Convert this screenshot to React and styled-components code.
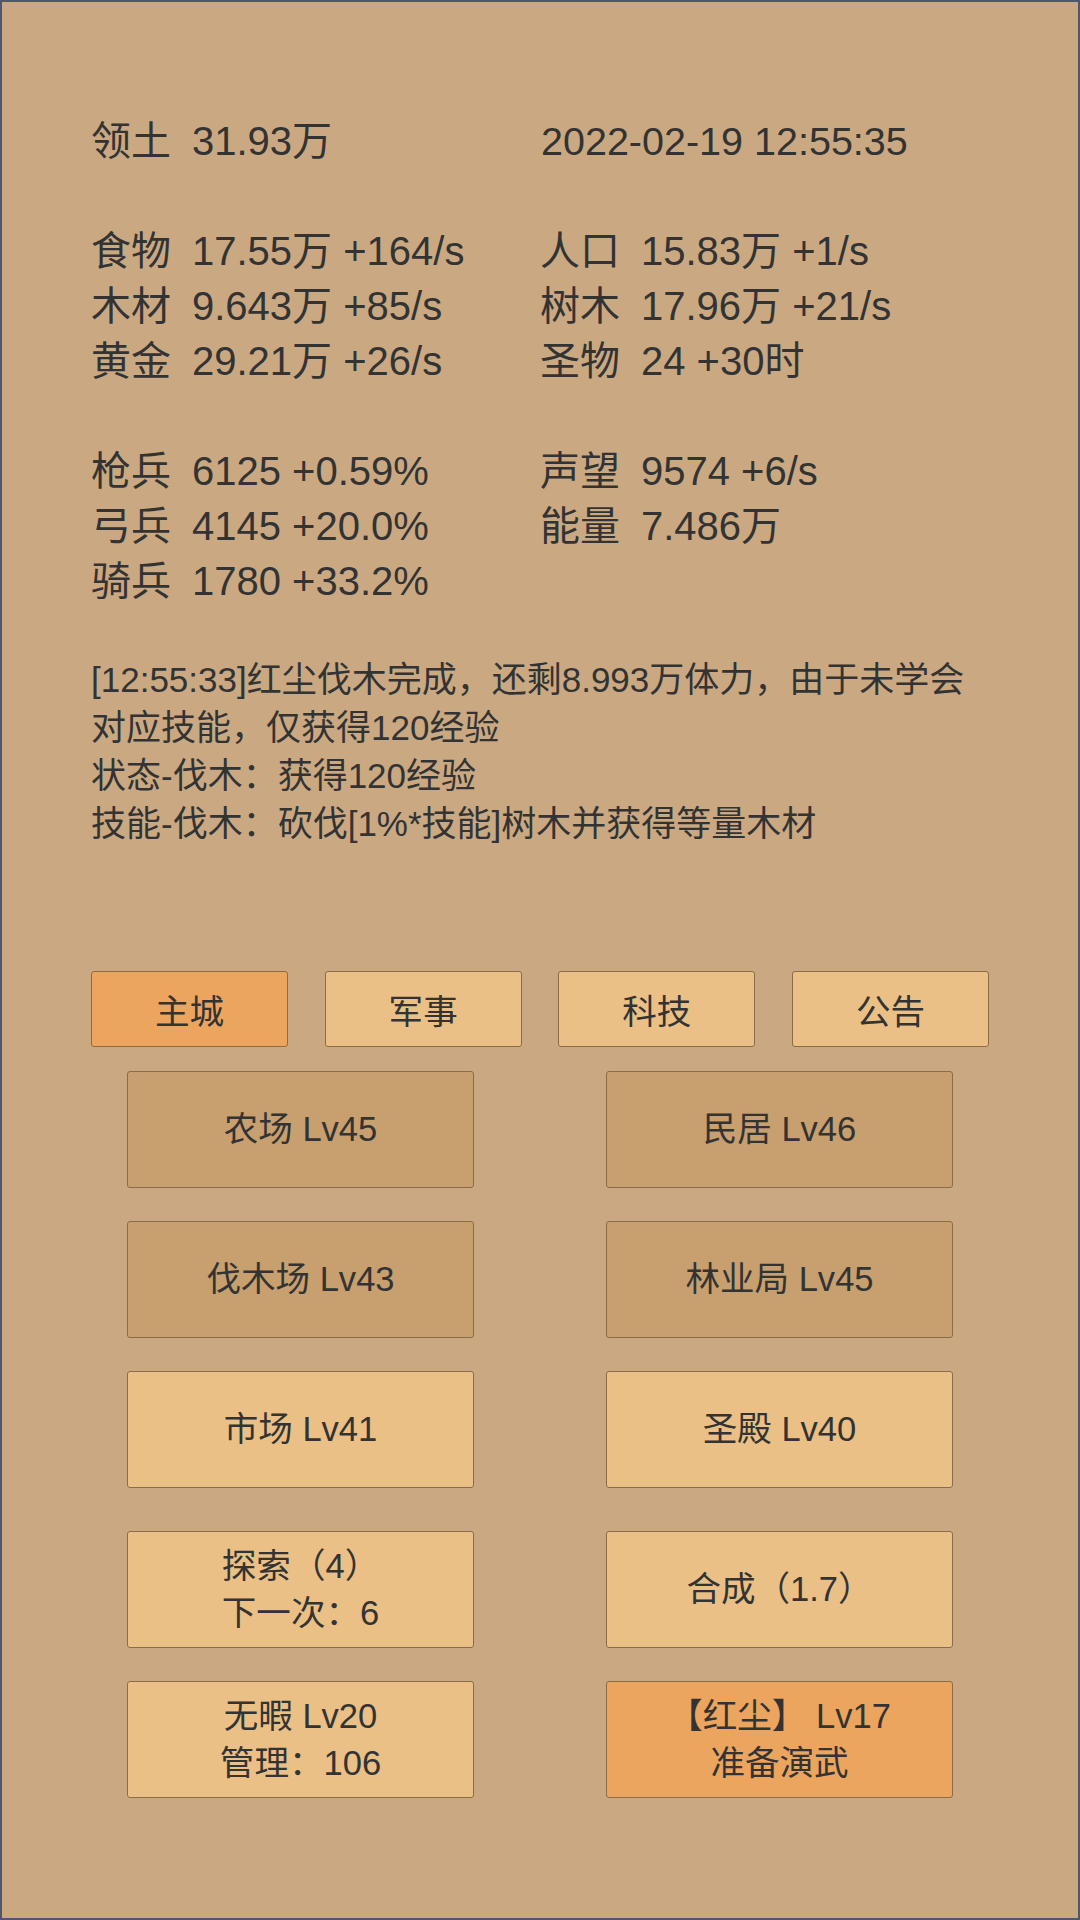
import React from 'react'
import styled, { createGlobalStyle } from 'styled-components'

const GlobalStyle = createGlobalStyle`
  html, body {
    margin: 0;
    padding: 0;
  }
  body {
    font-family: "Liberation Sans", "Noto Sans CJK SC", sans-serif;
    color: #333;
  }
  * {
    box-sizing: border-box;
  }
`

const stats = [
  [
    { label: '领土', value: '31.93万' },
    { label: '', value: '2022-02-19 12:55:35', clock: true },
  ],
  [
    { label: '食物', value: '17.55万 +164/s' },
    { label: '人口', value: '15.83万 +1/s' },
    { label: '木材', value: '9.643万 +85/s' },
    { label: '树木', value: '17.96万 +21/s' },
    { label: '黄金', value: '29.21万 +26/s' },
    { label: '圣物', value: '24 +30时' },
  ],
  [
    { label: '枪兵', value: '6125 +0.59%' },
    { label: '声望', value: '9574 +6/s' },
    { label: '弓兵', value: '4145 +20.0%' },
    { label: '能量', value: '7.486万' },
    { label: '骑兵', value: '1780 +33.2%' },
  ],
]

const logs = [
  '[12:55:33]红尘伐木完成，还剩8.993万体力，由于未学会对应技能，仅获得120经验',
  '状态-伐木：获得120经验',
  '技能-伐木：砍伐[1%*技能]树木并获得等量木材',
]

const tabs = ['主城', '军事', '科技', '公告']

const buildings = [
  { name: '农场 Lv45', busy: true },
  { name: '民居 Lv46', busy: true },
  { name: '伐木场 Lv43', busy: true },
  { name: '林业局 Lv45', busy: true },
  { name: '市场 Lv41' },
  { name: '圣殿 Lv40' },
]

const actions = [
  { lines: ['探索（4）', '下一次：6'] },
  { lines: ['合成（1.7）'] },
  { lines: ['无暇 Lv20', '管理：106'] },
  { lines: ['【红尘】 Lv17', '准备演武'], active: true },
]

const App = () => {
  return (
    <Page>
      <GlobalStyle />
      {stats.map((group, i) => (
        <StatGroup key={i}>
          {group.map((s, j) => (
            <Stat key={j} $clock={s.clock}>
              {s.label && <Label>{s.label}</Label>}
              <span>{s.value}</span>
            </Stat>
          ))}
        </StatGroup>
      ))}

      <Log>
        {logs.map((line, i) => (
          <div key={i}>{line}</div>
        ))}
      </Log>

      <Tabs>
        {tabs.map((t, i) => (
          <Tab key={t} $active={i === 0}>{t}</Tab>
        ))}
      </Tabs>

      <Grid>
        {buildings.map((b) => (
          <Button key={b.name} $variant={b.busy ? 'busy' : 'idle'}>{b.name}</Button>
        ))}
      </Grid>

      <Grid $spaced>
        {actions.map((a, i) => (
          <Button key={i} $variant={a.active ? 'active' : 'idle'}>
            {a.lines.map((l) => (
              <div key={l}>{l}</div>
            ))}
          </Button>
        ))}
      </Grid>
    </Page>
  )
}

const Page = styled.div`
  width: 1080px;
  height: 1920px;
  border: 2px solid #4f5670;
  background-color: #caa982;
  padding: 112px 89px 0;
  display: flex;
  flex-direction: column;
  overflow: hidden;
`

const StatGroup = styled.div`
  display: grid;
  grid-template-columns: 449px 1fr;
  font-size: 40px;
  line-height: 55px;
  margin-bottom: 55px;
  &:last-of-type {
    margin-bottom: 0;
  }
`

const Stat = styled.div`
  display: flex;
  white-space: nowrap;
  font-size: ${(p) => (p.$clock ? '39.5px' : 'inherit')};
  padding-left: ${(p) => (p.$clock ? '1px' : '0')};
`

const Label = styled.span`
  margin-right: 21px;
`

const Log = styled.div`
  width: 890px;
  margin-top: -8px;
  font-size: 35px;
  line-height: 48px;
`

const Tabs = styled.div`
  display: grid;
  grid-template-columns: repeat(4, 197px);
  justify-content: space-between;
  width: 898px;
  margin-top: 123px;
`

const Tab = styled.div`
  height: 76px;
  display: flex;
  align-items: center;
  justify-content: center;
  font-size: 34.56px;
  border: 1px solid #8c6b46;
  border-radius: 3px;
  background-color: ${(p) => (p.$active ? '#eba55e' : '#eac086')};
`

const Grid = styled.div`
  display: grid;
  grid-template-columns: 347px 347px;
  justify-content: space-between;
  row-gap: 33px;
  width: 898px;
  padding: 0 36px 0 36px;
  margin-top: ${(p) => (p.$spaced ? '43px' : '24px')};
`

const buttonColors = {
  busy: '#c89f6e',
  idle: '#eac086',
  active: '#eba55e',
}

const Button = styled.div`
  height: 117px;
  display: flex;
  flex-direction: column;
  align-items: center;
  justify-content: center;
  font-size: 34.56px;
  line-height: 47px;
  border: 1px solid #8c6b46;
  border-radius: 3px;
  background-color: ${(p) => buttonColors[p.$variant]};
`

export default App
